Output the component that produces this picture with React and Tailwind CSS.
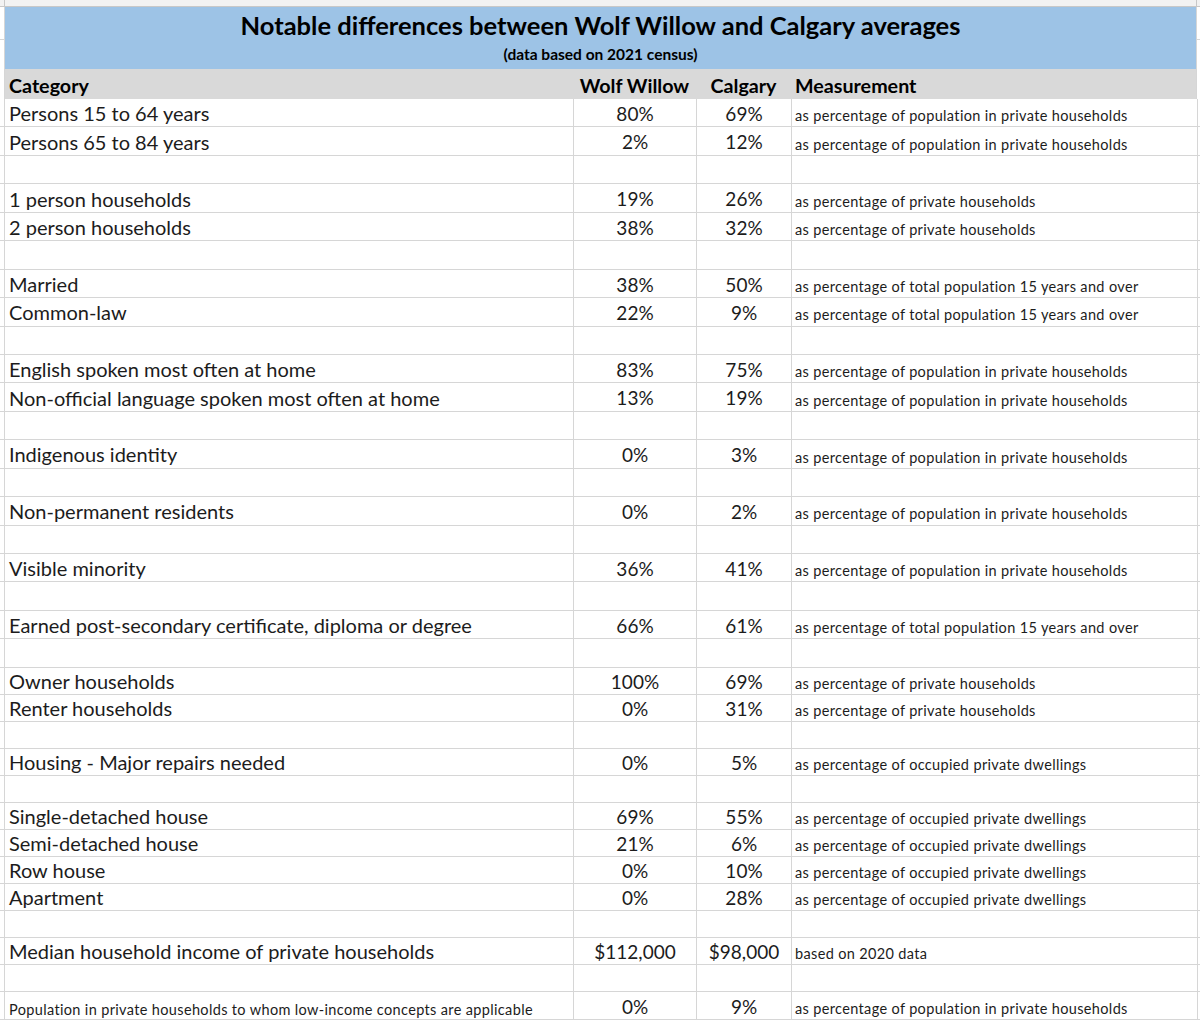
import React from 'react';

const POP = 'as percentage of population in private households';
const PH = 'as percentage of private households';
const TOT = 'as percentage of total population 15 years and over';
const OCC = 'as percentage of occupied private dwellings';

// [category, wolf willow, calgary, measurement]
const rows = [
  ['Persons 15 to 64 years', '80%', '69%', POP],
  ['Persons 65 to 84 years', '2%', '12%', POP],
  null,
  ['1 person households', '19%', '26%', PH],
  ['2 person households', '38%', '32%', PH],
  null,
  ['Married', '38%', '50%', TOT],
  ['Common-law', '22%', '9%', TOT],
  null,
  ['English spoken most often at home', '83%', '75%', POP],
  ['Non-official language spoken most often at home', '13%', '19%', POP],
  null,
  ['Indigenous identity', '0%', '3%', POP],
  null,
  ['Non-permanent residents', '0%', '2%', POP],
  null,
  ['Visible minority', '36%', '41%', POP],
  null,
  ['Earned post-secondary certificate, diploma or degree', '66%', '61%', TOT],
  null,
  ['Owner households', '100%', '69%', PH],
  ['Renter households', '0%', '31%', PH],
  null,
  ['Housing - Major repairs needed', '0%', '5%', OCC],
  null,
  ['Single-detached house', '69%', '55%', OCC],
  ['Semi-detached house', '21%', '6%', OCC],
  ['Row house', '0%', '10%', OCC],
  ['Apartment', '0%', '28%', OCC],
  null,
  ['Median household income of private households', '$112,000', '$98,000', 'based on 2020 data'],
  null,
  ['Population in private households to whom low-income concepts are applicable', '0%', '9%', POP],
];

const font = { fontFamily: 'Lato, "Open Sans", sans-serif' };

function Row({ data, index }) {
  const tall = index < 20;
  const last = index === rows.length - 1;
  const h = tall ? 'h-[28.44px]' : last ? 'h-[28px]' : 'h-[27px]';
  const cell = 'box-border border-r border-b border-[#d6d6d6] shrink-0 flex items-center';
  return (
    <div className={`flex ${h}`}>
      <div className={`${cell} w-[5px]`} />
      <div
        className={`${cell} w-[569px] pl-[4px] ${
          last ? 'text-[14.5px] tracking-[0.35px] pt-[9px]' : 'text-[20px] pt-[1px]'
        }`}
      >
        {data ? data[0] : ''}
      </div>
      <div className={`${cell} w-[123px] justify-center text-[19px] pt-[3px]`}>{data ? data[1] : ''}</div>
      <div className={`${cell} w-[95px] justify-center text-[19px] pt-[3px]`}>{data ? data[2] : ''}</div>
      <div className={`${cell} w-[406px] pl-[3px] pt-[7px] text-[14.5px] tracking-[0.35px]`}>
        {data ? data[3] : ''}
      </div>
      <div className={`${cell} w-[3px] border-r-0`} />
    </div>
  );
}

export default function App() {
  return (
    <div className="w-[1200px] h-[1025px] overflow-hidden bg-white text-[#1c1c1c]" style={font}>
      {/* top sliver of the row above */}
      <div className="flex h-[7px]">
        <div className="w-[5px] box-border border-r border-b border-[#c8c8c8] bg-[#f2f2f2]" />
        <div className="w-[1192px] box-border border-r border-b border-[#c8c8c8] bg-[#f2f2f2]" />
        <div className="w-[3px] box-border border-b border-[#c8c8c8] bg-[#f2f2f2]" />
      </div>

      {/* title block */}
      <div className="flex h-[62px]">
        <div className="w-[5px] flex flex-col">
          <div className="h-[33px] box-border border-r border-b border-[#d6d6d6]" />
          <div className="h-[29px] box-border border-r border-[#d6d6d6]" />
        </div>
        <div className="w-[1191px] bg-[#9dc3e6] flex flex-col items-center text-black">
          <div className="text-[25.5px] font-bold leading-none mt-[6px]">
            Notable differences between Wolf Willow and Calgary averages
          </div>
          <div className="text-[15.5px] font-bold leading-none mt-[8px]">(data based on 2021 census)</div>
        </div>
        <div className="w-[4px] flex flex-col">
          <div className="h-[33px] box-border border-l border-b border-[#d6d6d6]" />
          <div className="h-[29px] box-border border-l border-[#d6d6d6]" />
        </div>
      </div>

      {/* column headings */}
      <div className="flex h-[30px] font-bold text-[19.7px] text-black">
        <div className="w-[5px] box-border border-r border-[#d6d6d6]" />
        <div className="w-[1191px] bg-[#d9d9d9] flex items-center pt-[4px]">
          <div className="w-[568px] pl-[4px]">Category</div>
          <div className="w-[123px] text-center">Wolf Willow</div>
          <div className="w-[95px] text-center">Calgary</div>
          <div className="pl-[4px]">Measurement</div>
        </div>
        <div className="w-[4px] box-border border-l border-[#d6d6d6]" />
      </div>

      {rows.map((r, i) => (
        <Row key={i} data={r} index={i} />
      ))}
    </div>
  );
}
